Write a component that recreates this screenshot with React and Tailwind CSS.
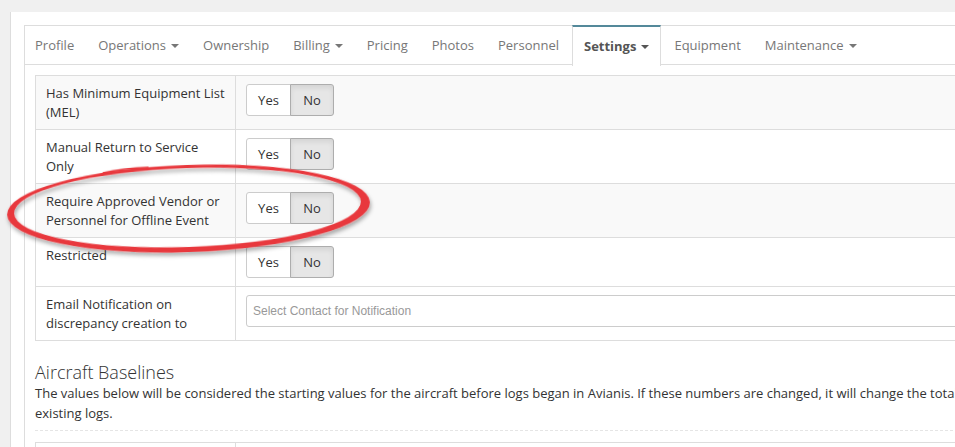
import React from "react";

const tabs = [
  { label: "Profile" },
  { label: "Operations", caret: true },
  { label: "Ownership" },
  { label: "Billing", caret: true },
  { label: "Pricing" },
  { label: "Photos" },
  { label: "Personnel" },
  { label: "Settings", caret: true, active: true },
  { label: "Equipment" },
  { label: "Maintenance", caret: true },
];

const rows = [
  { label: ["Has Minimum Equipment List", "(MEL)"], kind: "toggle", striped: true },
  { label: ["Manual Return to Service", "Only"], kind: "toggle" },
  { label: ["Require Approved Vendor or", "Personnel for Offline Event"], kind: "toggle", striped: true },
  { label: ["Restricted"], kind: "toggle" },
  { label: ["Email Notification on", "discrepancy creation to"], kind: "select" },
];

function Caret({ dark }) {
  return (
    <span
      className={`ml-[5px] inline-block h-0 w-0 border-x-4 border-t-4 border-x-transparent align-middle ${
        dark ? "border-t-[#555]" : "border-t-[#777]"
      }`}
    />
  );
}

function Toggle() {
  return (
    <div className="flex h-[32px] w-fit text-[13px] text-[#333]">
      <button className="h-full w-[45px] rounded-l-[3px] border border-[#ccc] bg-white">Yes</button>
      <button className="-ml-px h-full w-[44px] rounded-r-[3px] border border-[#adadad] bg-[#e6e6e6] shadow-[inset_0_3px_5px_rgba(0,0,0,0.08)]">
        No
      </button>
    </div>
  );
}

function Ellipse() {
  return (
    <svg
      className="pointer-events-none absolute left-0 top-0"
      width="955"
      height="447"
      viewBox="0 0 955 447"
    >
      <defs>
        <filter id="sh" x="-10%" y="-30%" width="120%" height="160%">
          <feDropShadow dx="1" dy="3" stdDeviation="2" floodColor="#000" floodOpacity="0.35" />
        </filter>
      </defs>
      <g transform="rotate(-2 188 208)" filter="url(#sh)">
        <path
          fillRule="evenodd"
          fill="#e8383d"
          d="M7 208.5 A181 43.5 0 1 0 370 208.5 A181 43.5 0 1 0 7 208.5 Z M14 207.5 A173 39.5 0 1 1 361 207.5 A173 39.5 0 1 1 14 207.5 Z"
        />
        <path d="M104 170 Q125 166 150 166" stroke="#e8383d" strokeWidth="1.6" fill="none" />
      </g>
    </svg>
  );
}

export default function App() {
  return (
    <div
      className="relative h-[447px] w-[955px] overflow-hidden bg-[#f0f0f0] pl-[10px] pt-[12px]"
      style={{ fontFamily: '"Open Sans", "Liberation Sans", sans-serif' }}
    >
      <div className="h-full w-[1200px] border-l border-[#ddd] bg-white pl-[13px] pt-[13px]">
        <div className="w-[1100px] border border-[#ddd]">
          {/* tabs */}
          <ul className="-ml-px flex h-[39px] border-b border-[#ddd] pt-px text-[13px]">
            {tabs.map((tab) =>
              tab.active ? (
                <li
                  key={tab.label}
                  className="z-10 -mb-px -mt-[2px] mr-[2px] flex h-[41px] items-center border-x border-t-2 border-x-[#ddd] border-t-[#54899a] bg-white px-[11px] font-bold text-[#555]"
                >
                  {tab.label}
                  <Caret dark />
                </li>
              ) : (
                <li key={tab.label} className="mr-[2px] flex items-center px-[11px] text-[#777]">
                  {tab.label}
                  {tab.caret && <Caret />}
                </li>
              )
            )}
          </ul>

          <div className="p-[10px]">
            <table className="w-full border-collapse text-[13px] leading-[18.5px] text-[#333]">
              <tbody>
                {rows.map((row) => (
                  <tr key={row.label[0]} className={row.striped ? "bg-[#f9f9f9]" : "bg-white"}>
                    <td className="w-[200px] border border-[#ddd] px-[10px] py-[8px] align-top">
                      {row.label.map((line) => (
                        <div key={line}>{line}</div>
                      ))}
                    </td>
                    <td className="border border-[#ddd] px-[10px] py-[8px] align-top">
                      {row.kind === "toggle" ? (
                        <Toggle />
                      ) : (
                        <div
                          className="flex h-[32px] w-[800px] items-center rounded-[3px] border border-[#ccc] bg-white pl-[6px] text-[12px] text-[#999]"
                          style={{ fontFamily: '"Liberation Sans", Arial, sans-serif' }}
                        >
                          Select Contact for Notification
                        </div>
                      )}
                    </td>
                  </tr>
                ))}
              </tbody>
            </table>

            <h3 className="mt-[20px] text-[18px] font-light leading-[22px] text-[#333]">Aircraft Baselines</h3>
            <p className="text-[13px] leading-[20px] text-[#333]">
              The values below will be considered the starting values for the aircraft before logs began in Avianis. If
              these numbers are changed, it will change the totals for all
              <br />
              existing logs.
            </p>
            <div className="mt-[7px] border-t border-dashed border-[#e5e5e5]" />

            <table className="mt-[11px] w-full border-collapse text-[13px] text-[#333]">
              <tbody>
                <tr>
                  <td className="h-[40px] w-[200px] border border-[#ddd]" />
                  <td className="border border-[#ddd]" />
                </tr>
              </tbody>
            </table>
          </div>
        </div>
      </div>
      <Ellipse />
    </div>
  );
}
